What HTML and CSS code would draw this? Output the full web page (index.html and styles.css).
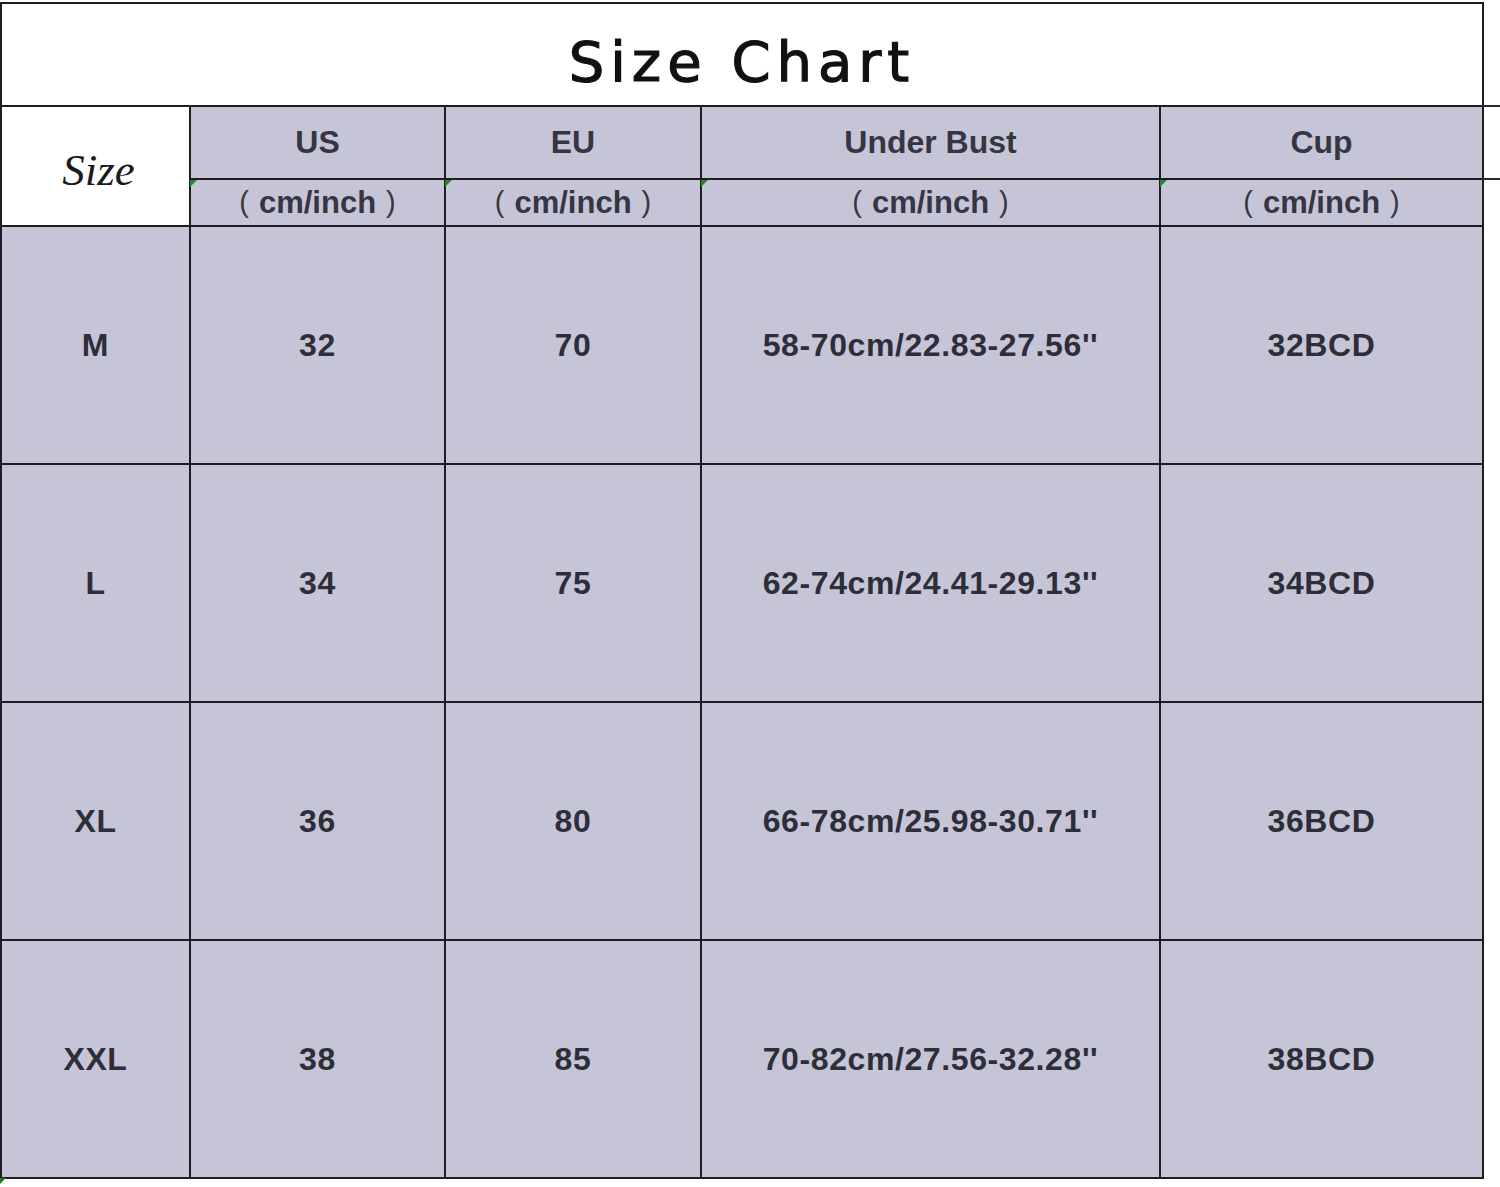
FILE: index.html
```html
<!DOCTYPE html>
<html lang="en">
<head>
<meta charset="utf-8">
<title>Size Chart</title>
<link rel="stylesheet" href="styles.css">
</head>
<body>
<div class="chart">
  <div class="title">Size Chart</div>

  <div class="size-head">Size</div>
  <div class="head">US</div>
  <div class="head">EU</div>
  <div class="head">Under Bust</div>
  <div class="head head-last">Cup</div>

  <div class="unit"><span class="paren">(</span>cm/inch<span class="paren">)</span></div>
  <div class="unit"><span class="paren">(</span>cm/inch<span class="paren">)</span></div>
  <div class="unit"><span class="paren">(</span>cm/inch<span class="paren">)</span></div>
  <div class="unit"><span class="paren">(</span>cm/inch<span class="paren">)</span></div>

  <div class="cell">M</div>
  <div class="cell">32</div>
  <div class="cell">70</div>
  <div class="cell">58-70cm/22.83-27.56''</div>
  <div class="cell">32BCD</div>

  <div class="cell">L</div>
  <div class="cell">34</div>
  <div class="cell">75</div>
  <div class="cell">62-74cm/24.41-29.13''</div>
  <div class="cell">34BCD</div>

  <div class="cell">XL</div>
  <div class="cell">36</div>
  <div class="cell">80</div>
  <div class="cell">66-78cm/25.98-30.71''</div>
  <div class="cell">36BCD</div>

  <div class="cell cell-corner">XXL</div>
  <div class="cell">38</div>
  <div class="cell">85</div>
  <div class="cell">70-82cm/27.56-32.28''</div>
  <div class="cell">38BCD</div>
</div>
</body>
</html>
```

FILE: styles.css
```css
html, body {
  margin: 0;
  padding: 0;
  background: #ffffff;
}

body {
  width: 1500px;
  height: 1187px;
  overflow: hidden;
  font-family: "Liberation Sans", Arial, sans-serif;
}

.chart {
  margin-top: 2px;
  display: grid;
  width: fit-content;
  grid-template-columns: 187px 253px 254px 457px 321px;
  grid-template-rows: 101px 71px 45px 236px 236px 236px 236px;
  gap: 2px;
  padding: 2px;
  background: #1d1d22;
}

.title {
  grid-column: 1 / -1;
  background: #ffffff;
  display: flex;
  align-items: center;
  justify-content: center;
  padding-top: 14px;
  box-sizing: border-box;
  font-family: "DejaVu Sans", Verdana, sans-serif;
  font-size: 56px;
  letter-spacing: 6px;
  color: #111111;
  -webkit-text-stroke: 1.2px #111111;
}

.size-head {
  grid-row: 2 / 4;
  background: #ffffff;
  display: flex;
  align-items: center;
  justify-content: center;
  padding-top: 8px;
  padding-left: 6px;
  box-sizing: border-box;
  font-family: "Liberation Serif", "Times New Roman", serif;
  font-style: italic;
  font-size: 45px;
  color: #1a1a1a;
}

.head,
.unit,
.cell {
  background: #c6c5d8;
  display: flex;
  align-items: center;
  justify-content: center;
  font-weight: bold;
  color: #2e2e38;
  position: relative;
}

.head {
  font-size: 32px;
  color: #363642;
}

.head-last::before,
.head-last::after {
  content: "";
  position: absolute;
  left: 100%;
  width: 18px;
  height: 2px;
  background: #2a2a30;
}

.head-last::before {
  top: -2px;
}

.head-last::after {
  top: 100%;
}

.unit {
  font-size: 31px;
  color: #363642;
}

.paren {
  font-weight: normal;
  font-size: 29px;
  margin: 0 10px;
}

.unit::before {
  content: "";
  position: absolute;
  left: -1px;
  top: 0;
  width: 0;
  height: 0;
  border-top: 7px solid #1f8a2a;
  border-right: 7px solid transparent;
}

.cell {
  font-size: 32px;
  letter-spacing: 0.6px;
}

.cell-corner::after {
  content: "";
  position: absolute;
  left: -2px;
  top: calc(100% + 1px);
  width: 0;
  height: 0;
  border-top: 6px solid #1f7a2a;
  border-right: 6px solid transparent;
}
```
